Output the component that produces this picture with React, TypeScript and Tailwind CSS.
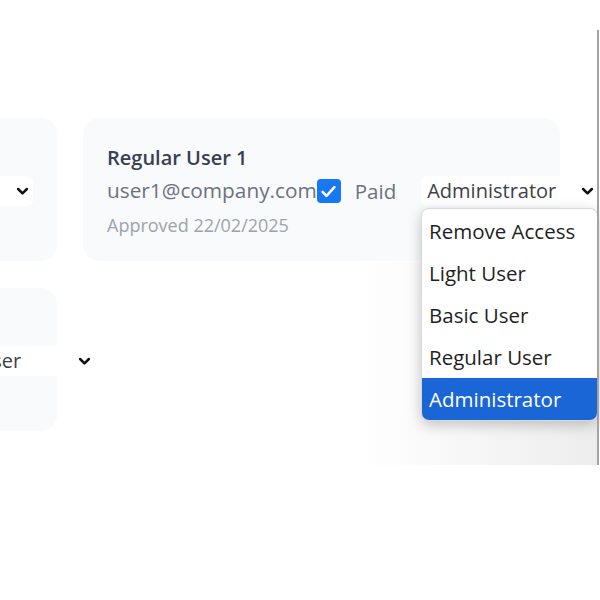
import React from "react";

const Chevron = () => (
  <svg width="15" height="15" viewBox="0 0 24 24" fill="none" stroke="#111" strokeWidth="4" strokeLinecap="round" strokeLinejoin="round">
    <path d="M5 8l7 7 7-7" />
  </svg>
);

const Check = () => (
  <svg width="19" height="19" viewBox="0 0 24 24" fill="none" stroke="#fff" strokeWidth="3.2" strokeLinecap="round" strokeLinejoin="round">
    <path d="M4.5 12.5l5 5L19.5 6.5" />
  </svg>
);

function Select({ value }: { value: string }) {
  return (
    <div className="relative flex h-[30px] w-[177px] items-center rounded-md bg-white pl-[6px] text-[20px] text-[#3f3f46]">
      <span>{value}</span>
      <span className="absolute right-[3px] top-[8px]">
        <Chevron />
      </span>
    </div>
  );
}

function Card({ name, email, role, date }: { name: string; email: string; role: string; date: string }) {
  return (
    <div className="h-[143px] w-[477px] shrink-0 rounded-2xl bg-[#f9fafb] px-6 pt-[26px]">
      <div className="text-[20px] font-semibold leading-[28px] text-[#374151]">{name}</div>
      <div className="mt-[4px] flex h-[30px] items-center">
        <span className="shrink-0 text-[20.8px] text-[#6b7280]">{email}</span>
        <span className="flex h-[24px] w-[24px] shrink-0 items-center justify-center rounded-[4px] bg-[#1877f2]">
          <Check />
        </span>
        <span className="ml-[14px] shrink-0 text-[20.5px] text-[#6b7280]">Paid</span>
        <span className="ml-[25px] shrink-0">
          <Select value={role} />
        </span>
      </div>
      <div className="mt-[7px] text-[18px] leading-[24px] text-[#9ca3af]">{date}</div>
    </div>
  );
}

export default function App() {
  const items = ["Remove Access", "Light User", "Basic User", "Regular User", "Administrator"];
  return (
    <div className="relative h-[600px] w-[600px] overflow-hidden bg-white font-['Open_Sans','Noto_Sans',sans-serif]">
      <div className="pointer-events-none absolute left-[360px] top-[262px] h-[203px] w-[237px] bg-gradient-to-r from-white to-[#ededed]" />
      <div className="relative ml-[-420px] flex flex-col gap-[27px] pt-[118px]">
        <div className="flex gap-[26px]">
          <div className="h-[143px] w-[477px] shrink-0 rounded-2xl bg-[#f9fafb] px-6 pt-[26px]">
            <div className="text-[20px] font-semibold leading-[28px] text-[#374151]">Basic User 2</div>
            <div className="mt-[4px] flex h-[30px] items-center">
              <span className="shrink-0 text-[20.8px] text-[#6b7280]">user2@company.com</span>
              <span className="ml-[42px] shrink-0">
                <Select value="Basic User" />
              </span>
            </div>
            <div className="mt-[7px] text-[18px] leading-[24px] text-[#9ca3af]">Approved 20/02/2025</div>
          </div>
          <Card name="Regular User 1" email="user1@company.com" role="Administrator" date="Approved 22/02/2025" />
        </div>
        <div className="flex gap-[26px]">
          <Card name="Basic User 3" email="user3@company.com" role="Basic User" date="Approved 21/02/2025" />
        </div>
      </div>
      <div className="absolute left-[421px] top-[208px] w-[177px] overflow-hidden rounded-lg border border-[#d9d9d9] bg-white pt-[1px] shadow-[0_4px_14px_rgba(0,0,0,0.22)]">
        {items.map((it) => (
          <div
            key={it}
            className={
              "flex h-[42px] items-center pl-[7px] text-[20.5px] " +
              (it === "Administrator" ? "bg-[#1a66d6] text-white" : "text-[#1f1f1f]")
            }
          >
            {it}
          </div>
        ))}
      </div>
      <div className="absolute left-[597px] top-[30px] h-[435px] w-[2px] bg-[#a3a3a3]" />
    </div>
  );
}
